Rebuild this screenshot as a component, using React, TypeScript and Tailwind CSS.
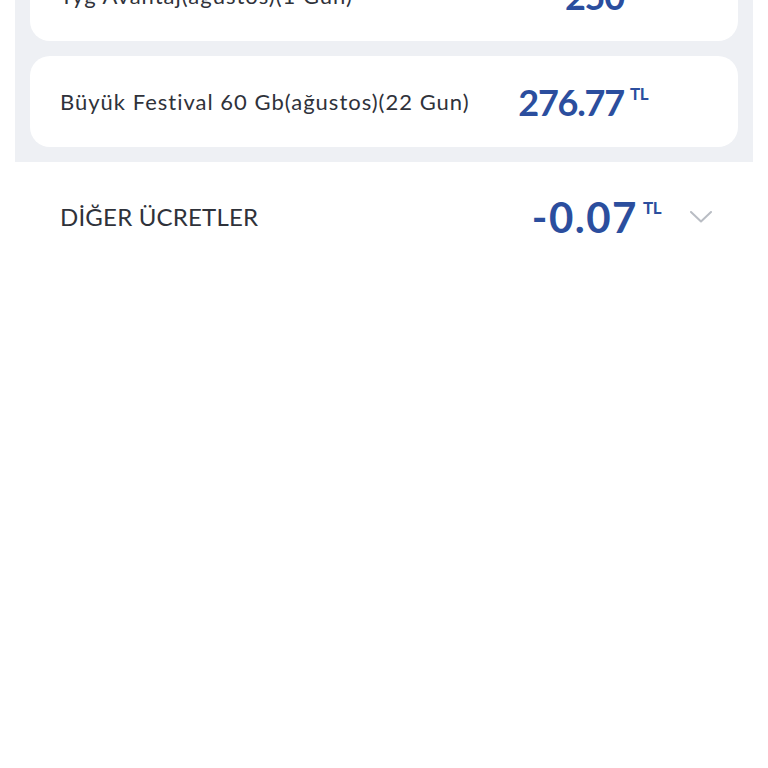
interface Charge {
  label: string;
  amount: string;
}

const charges: Charge[] = [
  { label: "Tyg Avantaj(ağustos)(1 Gun)", amount: "250" },
  { label: "Büyük Festival 60 Gb(ağustos)(22 Gun)", amount: "276.77" },
];

function Amount({ value, size }: { value: string; size: "md" | "lg" }) {
  const numberClass =
    size === "lg" ? "text-[42px] tracking-[1.5px]" : "text-[36px] tracking-[-1.2px]";
  const unitClass = size === "lg" ? "ml-[5px] mt-[3px]" : "ml-[6px] mt-[1px]";

  return (
    <div className="flex items-start text-[#2b4e9e]">
      <span className={`font-bold leading-none ${numberClass}`}>{value}</span>
      <span className={`text-[17px] font-bold leading-none tracking-[-0.5px] ${unitClass}`}>
        TL
      </span>
    </div>
  );
}

function Chevron() {
  return (
    <svg width="22" height="12" viewBox="0 0 22 12" fill="none" className="text-[#b9bdc4]">
      <polyline
        points="1,1 11,10.5 21,1"
        stroke="currentColor"
        strokeWidth="2"
        strokeLinecap="round"
        strokeLinejoin="round"
      />
    </svg>
  );
}

export default function App() {
  return (
    <div
      className="min-h-[768px] bg-white"
      style={{ fontFamily: "Lato, 'Open Sans', sans-serif" }}
    >
      <div className="mx-[15px] mt-[-65px] flex flex-col gap-[15px] bg-[#eef0f4] px-[15px] pt-[15px] pb-[15px]">
        {charges.map((charge) => (
          <div
            key={charge.label}
            className="flex h-[91px] items-center justify-between rounded-[20px] bg-white pl-[30px] pr-[90px]"
          >
            <span className="text-[22px] tracking-[1px] text-[#2f323a]">{charge.label}</span>
            <Amount value={charge.amount} size="md" />
          </div>
        ))}
      </div>

      <div className="flex h-[110px] items-center justify-between pl-[60px] pr-[56px]">
        <span className="text-[24px] tracking-[0.2px] text-[#2f323a]">DİĞER ÜCRETLER</span>
        <div className="flex items-center gap-[29px]">
          <Amount value="-0.07" size="lg" />
          <Chevron />
        </div>
      </div>
    </div>
  );
}
